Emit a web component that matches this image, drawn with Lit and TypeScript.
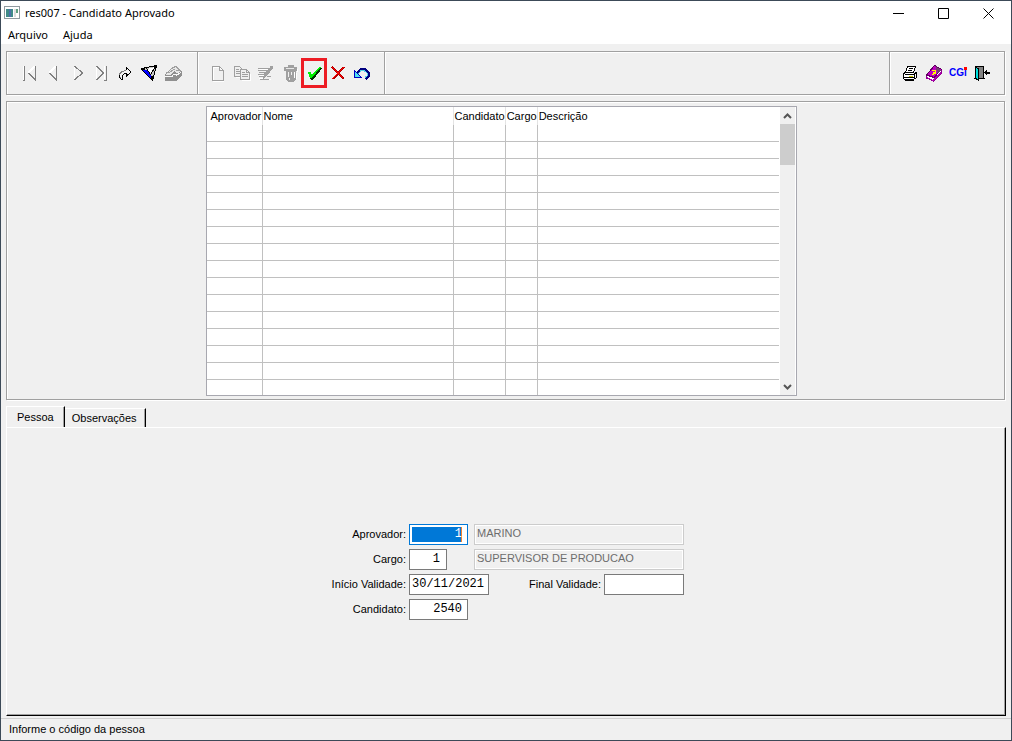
import { LitElement, html, svg, css } from "lit";
import { customElement, state } from "lit/decorators.js";

const icons = {
  first: svg`<path d="M2.500 1v14" stroke="#fff"/><path d="M3.500 1v14h-2M14.500 1v14L7.500 8" stroke="#808080"/><path d="M7.500 8L13.500 1" stroke="#fff" stroke-width="2"/>`,
  prev: svg`<path d="M11.500 1v14L4.500 8" stroke="#808080"/><path d="M4.500 8L10.500 1" stroke="#fff" stroke-width="2"/>`,
  next: svg`<path d="M5.500 1v14" stroke="#fff"/><path d="M5.500 1l8 7l-8 7" stroke="#808080" stroke-width="1.300"/>`,
  last: svg`<path d="M3.500 1v14M11.500 1v13" stroke="#fff"/><path d="M3.500 1l7 7l-7 7M10.500 15.500h3M13.500 1v14" stroke="#808080"/>`,
  jump: svg`<path d="M5.500 15.500C1 12 2 6 9.500 5.500V2.500L14 7L9.500 11V8.500C5 8.500 4 11 5.500 15.500Z" fill="#f4f4f4"/><path d="M4.500 14.500L2.500 12V9L5 6.500L9.500 5.500" stroke="#808080"/><path d="M2.500 9.500v3l2.500 2.500M9.500 5V2.500L14 7L9.500 11V8.500C6 8.500 4.500 11 5.500 15.500" stroke="#000"/>`,
  filter: svg`<path d="M.5 4L15.500.5L11.500 15.500Z" fill="#c8c8c8"/><path d="M2 5h4l4 5l1 5z" fill="#0000ff"/><path d="M6 4l8-2l-4 7z" fill="#fff"/><path d="M.5 3.500L15.500.500L11.500 15.500L.500 4.500M5.500 3.500L9.500 9.500L14.500 1.500" stroke="#000"/><path d="M0 4h4M11 11v4M13 2h3" stroke="#000" stroke-width="2"/>`,
  eraser: svg`<path d="M0 9l8-7h4l5 4v5l-6 5H0z" fill="#909090"/><path d="M1 8L8 2L11 1L14 4L16 7L12 8L9 6L5 10H1z" fill="#e8e8e8"/><path d="M1 8.500L8 2.500L11 1.500L16 6.500" stroke="#a0a0a0"/><path d="M3 8L10 4M11 5l3 1" stroke="#a0a0a0"/><path d="M0 11.500h7L9 9h2v2L16 7" stroke="#f8f8f8"/>`,
  page: svg`<path d="M3.500 2.500h6l4 4v10h-10z" stroke="#fff"/><path d="M2.500 1.500h7l4 4v10h-11zM9.500 1.500v4h4" stroke="#a0a0a0"/>`,
  copy: svg`<path d="M1.500 12.500h5M7.500 15.500h9v-7" stroke="#fff"/><path d="M.5 1.500h5l3 3v7h-8z" fill="#f0f0f0" stroke="#a0a0a0"/><path d="M2 4.500h3M2 6.500h4M2 8.500h4" stroke="#a0a0a0"/><path d="M6.500 4.500h6l3 3v7h-9z" fill="#f0f0f0" stroke="#a0a0a0"/><path d="M8 7.500h3M8 9.500h6M8 11.500h6M12.500 5v2.500h3" stroke="#a0a0a0"/>`,
  edit: svg`<path d="M1 4.500h9M1 7.500h7M1 10.500h5M1 13.500h4M9 14.500h4" stroke="#fff"/><path d="M0 3.500h11M0 5.500h9M1 7.500h7M0 9.500h6M1 11.500h5M9 11.500h4M2 14.500h9" stroke="#a0a0a0"/><path d="M13 1h2v2l-6 8l-4 3l1-5z" fill="#a0a0a0"/><path d="M14 2l-6 8" stroke="#a0a0a0" stroke-width="3"/>`,
  trash: svg`<path d="M4 6h10v8l-2 3H7l-3-2z" fill="#a0a0a0"/><path d="M2 2h4V0h6v2h3v4H2z" fill="#a0a0a0"/><path d="M4 3.500h8" stroke="#e8e8e8"/><path d="M6.500 7v5M7.500 13v2M9.500 7v3" stroke="#f0f0f0"/><path d="M12.500 7v6M15.500 4v3M14.500 8v6" stroke="#fff"/>`,
  confirm: svg`<path d="M3 9h2l1 3L14 3h1v1L7 14H5z" fill="#003000" stroke="#003000"/><path d="M2 7h3l1 3L13 2h2L6 13H4z" fill="#00f000"/>`,
  cancel: svg`<path d="M2 2l4 4l4 4l4 4M14 2L3 14" stroke="#b00000" stroke-width="2"/><path d="M2 2l11 11M14 2L2 14" stroke="#ff0000"/>`,
  undo: svg`<path d="M3 9L7 4.500H11L14.500 8V11L11.500 13.500" stroke="#000080" stroke-width="3"/><path d="M4 9.500L7 5.500H10L13.500 8.500V10.500L11 12.500" stroke="#50d0e8"/><path d="M.5 5.500v7h7z" fill="#50e0f0" stroke="#0000c0"/>`,
  print: svg`<path d="M5.500 1.500h8l-2 6h-8z" fill="#fff" stroke="#000"/><path d="M7 3.500h4M6 5.500h4" stroke="#000"/><path d="M3.500 7.500h-1l-1 2v4l1 1h9l3-2v-5h-2" fill="#fff" stroke="#000"/><path d="M3 9.500h9l2-2M2 12.500h10M12.500 9v5" stroke="#000"/><path d="M7 11.500h4" stroke="#c8c800"/><path d="M3 15.500h9" stroke="#000"/>`,
  book: svg`<path d="M.5 10.500L8 1l7.500 4.500v3L7.500 16L.5 13z" fill="#fff" stroke="#900090"/><path d="M.5 10L8.500.5L15.500 4.500L8 12.500z" fill="#c000c0" stroke="#600060"/><path d="M9 1l6 4l-3 4z" fill="#704070"/><path d="M1 12.500l6 3l8-8" stroke="#b000b0"/><path d="M6 5.500h4M9.500 6v2H7M5.500 9.500h2" stroke="#ffff00" stroke-width="1.500"/>`,
  exit: svg`<path d="M1.500 1.500h8v12h-8z" fill="#808080" stroke="#000"/><path d="M1.500 2l3 2v11.500l-3-2z" fill="#00e0e0" stroke="#000"/><path d="M0 13.500h3M8 13.500h3" stroke="#000"/><path d="M11 7.500h5" stroke="#000" stroke-width="2"/><path d="M13 4v7l-3-3.500z" fill="#000"/>`,
};

type IconName = keyof typeof icons;
type Tool = { icon: IconName | "cgi"; label: string; off?: boolean; marked?: boolean };

const navigation: Tool[] = [
  { icon: "first", label: "Primeiro", off: true },
  { icon: "prev", label: "Anterior", off: true },
  { icon: "next", label: "Próximo", off: true },
  { icon: "last", label: "Último", off: true },
  { icon: "jump", label: "Ir para" },
  { icon: "filter", label: "Filtrar" },
  { icon: "eraser", label: "Limpar filtro", off: true },
];
const editing: Tool[] = [
  { icon: "page", label: "Novo", off: true },
  { icon: "copy", label: "Copiar", off: true },
  { icon: "edit", label: "Alterar", off: true },
  { icon: "trash", label: "Excluir", off: true },
  { icon: "confirm", label: "Confirmar", marked: true },
  { icon: "cancel", label: "Cancelar" },
  { icon: "undo", label: "Desfazer" },
];
const general: Tool[] = [
  { icon: "print", label: "Imprimir" },
  { icon: "book", label: "Manual" },
  { icon: "cgi", label: "CGi" },
  { icon: "exit", label: "Sair" },
];
const columns = ["Aprovador", "Nome", "Candidato", "Cargo", "Descrição"];

@customElement("app-root")
export class AppRoot extends LitElement {
  @state() private tab = 0;

  static styles = css`
    :host { display: block; font: 11px/16px "Liberation Sans", Arial, sans-serif; color: #000; }
    * { box-sizing: border-box; }
    button { font: inherit; color: inherit; border: 0; padding: 0; background: none; }
    .window { display: flex; flex-direction: column; min-height: 100vh; background: #f0f0f0; border: 1px solid #3c4a58; }
    .titlebar { display: flex; align-items: center; height: 24px; padding-left: 3px; gap: 5px; background: #fff; font: 11px/16px "Noto Sans", sans-serif; }
    .titlebar h1 { flex: 1; margin: 0; font: inherit; }
    .app-icon { width: 16px; height: 14px; }
    .caption { display: flex; }
    .caption button { width: 45px; height: 24px; display: grid; place-items: center; }
    .menu { display: flex; gap: 15px; height: 19px; padding: 1px 0 0 7px; background: #fff; font: 11px/18px "Noto Sans", sans-serif; }
    .content { flex: 1; display: flex; flex-direction: column; padding: 7px 5px 2px; }
    .groove { border: 1px solid #a0a0a0; box-shadow: 1px 1px 0 #fff, inset 1px 1px 0 #fff; }
    .toolbar { display: flex; height: 44px; margin-right: 1px; }
    .group { display: flex; align-items: center; padding: 0 12px 0 10px; }
    .group + .group { border-left: 0; padding: 0 10px 0 8px; }
    .space { flex: 1; }
    .tool { width: 24px; height: 30px; display: grid; place-items: center; }
    .tool.marked { outline: 3px solid #ed1c24; outline-offset: -3px; width: 26px; margin: 0 -1px; }
    .tool svg { display: block; fill: none; overflow: visible; }
    .cgi { position: relative; font-weight: bold; font-size: 10px; color: #0000ff; }
    .cgi::after { content: ""; position: absolute; right: 0; top: 2px; width: 3px; height: 3px; background: #f00; }
    .list { display: flex; justify-content: center; margin: 6px 1px 0 0; padding: 4px 9px 3px 0; }
    .grid { display: flex; width: 591px; max-width: 100%; height: 290px; background: #fff; border: 1px solid #a8a8b0; overflow: hidden; }
    table { flex: 1; align-self: flex-start; table-layout: fixed; border-collapse: separate; border-spacing: 0; }
    th { height: 18px; padding: 0 0 0 1px; text-align: left; font-weight: normal; white-space: nowrap; border-right: 1px solid #e4e4e4; }
    td { height: 17px; padding: 0; border-bottom: 1px solid #c0c0c0; border-right: 1px solid #c0c0c0; }
    th:first-child { padding-left: 4px; }
    th:last-child, td:last-child { border-right: 0; }
    .c0 { width: 56px; }
    .c1 { width: 191px; }
    .c2 { width: 52px; }
    .c3 { width: 32px; }
    .scroll { width: 16px; margin-left: 1px; border-right: 1px solid #fff; background: #f0f0f0; display: flex; flex-direction: column; }
    .scroll button { height: 17px; display: grid; place-items: center; }
    .thumb { height: 41px; background: #cdcdcd; }
    .tabs { display: flex; align-items: flex-end; height: 21px; margin-top: 6px; }
    .tabs button { height: 19px; padding: 0 8px 0 7px; border-top: 1px solid #fff; border-right: 1px solid #000; box-shadow: inset -1px 0 0 #a0a0a0; }
    .tabs button[aria-selected="true"] { height: 21px; padding: 0 10px; border-left: 1px solid #fff; }
    .page { flex: 1; display: grid; place-items: center; border: 1px solid #fff; border-right-color: #000; border-bottom-color: #000; box-shadow: inset -1px -1px 0 #a0a0a0; }
    .form { display: grid; grid-template-columns: 78px 275px; column-gap: 3px; row-gap: 4px; align-items: center; }
    .form label { text-align: right; white-space: nowrap; }
    .fields { display: flex; align-items: center; justify-content: space-between; }
    .final { display: flex; align-items: center; gap: 3px; }
    input { height: 21px; margin: 0; padding: 2px 5px 2px 2px; border: 1px solid #7a7a7a; border-radius: 0; background: #fff; color: #000; font: 12px/15px "Liberation Mono", monospace; outline: 0; }
    .num { text-align: right; }
    .w38 { width: 38px; padding-right: 6px; }
    .w59 { width: 59px; }
    .w80 { width: 80px; padding-right: 0; }
    .w210 { width: 210px; }
    .active { border-color: #0078d7; color: #fff; background: linear-gradient(to left, #f08030 1px, #0078d7 1px) content-box, #fff; }
    .readonly { padding-bottom: 4px; border-color: #cccccc; background: #f0f0f0; box-shadow: inset 0 0 0 1px #fff; color: #6d6d6d; font: 11px/13px "Liberation Sans", Arial, sans-serif; }
    .status { height: 22px; padding: 2px 8px 0; border-top: 1px solid #d0d0d0; }
  `;

  private tools(items: Tool[]) {
    return items.map(
      (t) => html`<button class="tool ${t.marked ? "marked" : ""}" aria-label=${t.label} ?disabled=${t.off}>
        ${t.icon === "cgi"
          ? html`<span class="cgi">CGi</span>`
          : html`<svg width="16" height="16" viewBox="0 0 16 16" shape-rendering="crispEdges">${icons[t.icon]}</svg>`}
      </button>`
    );
  }

  private chevron(d: string) {
    return html`<svg width="9" height="8" viewBox="0 0 9 8" fill="none" stroke="#555" stroke-width="2"><path d=${d} /></svg>`;
  }

  render() {
    return html`<div class="window">
      <header class="titlebar">
        <svg class="app-icon" viewBox="0 0 16 14" shape-rendering="crispEdges">
          <path d="M.5.5h15v12H.5z" fill="#fff" stroke="#909aa0" />
          <path d="M2 3h7v8H2z" fill="#3f8a88" /><path d="M5 3h2v8H5z" fill="#4d70a8" />
          <path d="M10 3h2v8h-2z" fill="#ddd" /><path d="M12 3h2v4h-2z" fill="#60a080" />
        </svg>
        <h1>res007 - Candidato Aprovado</h1>
        <div class="caption">
          <button aria-label="Minimizar"><svg width="11" height="11" fill="none" stroke="#000"><path d="M0 5.500h11" /></svg></button>
          <button aria-label="Maximizar"><svg width="11" height="11" fill="none" stroke="#000"><path d="M.5.500h10v10H.5z" /></svg></button>
          <button aria-label="Fechar"><svg width="11" height="11" fill="none" stroke="#000"><path d="M.5.500l10 10M10.500.500l-10 10" /></svg></button>
        </div>
      </header>
      <nav class="menu"><button>Arquivo</button><button>Ajuda</button></nav>
      <main class="content">
        <div class="toolbar">
          <div class="group groove">${this.tools(navigation)}</div>
          <div class="group groove">${this.tools(editing)}</div>
          <div class="group groove space"></div>
          <div class="group groove">${this.tools(general)}</div>
        </div>
        <section class="list groove">
          <div class="grid">
            <table>
              <thead><tr>${columns.map((c, i) => html`<th class="c${i}" scope="col">${c}</th>`)}</tr></thead>
              <tbody>${Array.from({ length: 16 }, () => html`<tr>${columns.map(() => html`<td></td>`)}</tr>`)}</tbody>
            </table>
            <div class="scroll">
              <button aria-label="Rolar para cima">${this.chevron("M1 6l3.500-3.500L8 6")}</button>
              <div class="thumb"></div>
              <div class="space"></div>
              <button aria-label="Rolar para baixo">${this.chevron("M1 2l3.500 3.500L8 2")}</button>
            </div>
          </div>
        </section>
        <div class="tabs" role="tablist">
          ${["Pessoa", "Observações"].map(
            (t, i) => html`<button role="tab" aria-selected=${this.tab === i ? "true" : "false"} @click=${() => (this.tab = i)}>${t}</button>`
          )}
        </div>
        <section class="page" role="tabpanel">
          ${this.tab === 0
            ? html`<form class="form">
                <label for="aprovador">Aprovador:</label>
                <div class="fields">
                  <input id="aprovador" class="num w59 active" value="1" />
                  <input class="w210 readonly" aria-label="Nome do aprovador" value="MARINO" readonly />
                </div>
                <label for="cargo">Cargo:</label>
                <div class="fields">
                  <input id="cargo" class="num w38" value="1" />
                  <input class="w210 readonly" aria-label="Descrição do cargo" value="SUPERVISOR DE PRODUCAO" readonly />
                </div>
                <label for="inicio">Início Validade:</label>
                <div class="fields">
                  <input id="inicio" class="w80" value="30/11/2021" />
                  <div class="final"><label for="final">Final Validade:</label><input id="final" class="w80" /></div>
                </div>
                <label for="candidato">Candidato:</label>
                <div class="fields"><input id="candidato" class="num w59" value="2540" /></div>
              </form>`
            : ""}
        </section>
      </main>
      <footer class="status">Informe o código da pessoa</footer>
    </div>`;
  }
}
